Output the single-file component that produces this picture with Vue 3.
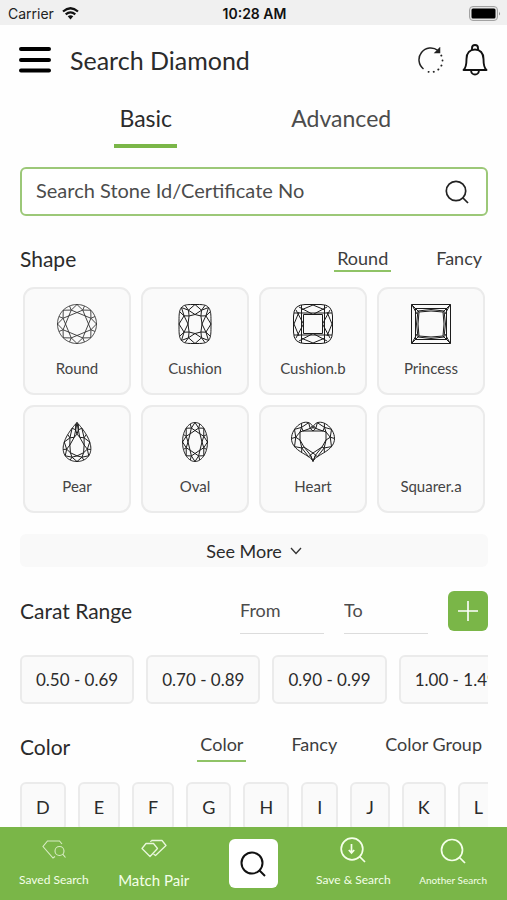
<script setup>
import { ref } from 'vue';

const mode = ref('Basic');
const shapeTab = ref('Round');
const colorTab = ref('Color');
const stone = ref('');
const from = ref('');
const to = ref('');

const carats = ['0.50 - 0.69', '0.70 - 0.89', '0.90 - 0.99', '1.00 - 1.49'];
const colors = ['D', 'E', 'F', 'G', 'H', 'I', 'J', 'K', 'L'];

const r = (p) => `${p[0].toFixed(2)} ${p[1].toFixed(2)}`;

// Builds a cut seen from above: outline, table and the facets between them
const facets = (n, outer, inner) => {
  let d = '';
  for (let i = 0; i <= 96; i++) d += `${i ? 'L' : 'M'}${r(outer(i / 96))}`;
  for (let i = 0; i < n; i++) {
    const a = inner(i / n);
    const b = inner((i + 1) / n);
    const half = outer((i + 0.5) / n);
    const mid = [(a[0] + b[0]) / 4 + half[0] / 2, (a[1] + b[1]) / 4 + half[1] / 2];
    d += `M${r(a)}L${r(b)}`;
    d += `M${r(outer(i / n))}L${r(mid)}L${r(outer((i + 1) / n))}`;
    d += `M${r(a)}L${r(mid)}L${r(b)}M${r(mid)}L${r(half)}`;
  }
  return d;
};

const ellipse = (rx, ry) => (t) => [
  22 + rx * Math.sin(t * 2 * Math.PI),
  22 - ry * Math.cos(t * 2 * Math.PI)
];

const cushion = (rx, ry) => (t) => {
  const s = Math.sin(t * 2 * Math.PI);
  const c = Math.cos(t * 2 * Math.PI);
  return [
    22 + rx * Math.sign(s) * Math.abs(s) ** 0.48,
    22 - ry * Math.sign(c) * Math.abs(c) ** 0.48
  ];
};

const pear = (k, cy) => (t) => {
  const a = t * 2 * Math.PI;
  return [22 + 18 * k * Math.sin(a) * Math.sin(a / 2), cy - 19.5 * k * Math.cos(a)];
};

const heart = (t) => {
  const a = t * 2 * Math.PI;
  return [
    22 + 21.5 * Math.sin(a) ** 3,
    20 - 1.53 * (13 * Math.cos(a) - 2 * Math.cos(2 * a) - 2 * Math.cos(3 * a) - Math.cos(4 * a))
  ];
};

const heartTable = (t) => {
  const pts = [[22, 11], [32, 11], [35, 12], [35, 20], [31, 27], [22, 33], [13, 27], [9, 20], [9, 12], [12, 11]];
  return pts[Math.round(t * 10) % 10];
};

const shapes = [
  { name: 'Round', d: facets(8, ellipse(19.5, 19.5), ellipse(11.5, 11.5)) },
  { name: 'Cushion', bold: true, d: facets(8, cushion(16, 19.5), cushion(7, 9.5)) },
  {
    name: 'Cushion.b',
    bold: true,
    d: 'M14 2.5H30Q41.500 2.500 41.500 14V30Q41.500 41.500 30 41.500H14Q2.500 41.500 2.500 30V14Q2.500 2.500 14 2.500Z' +
      'M12.500 12.500H31.500V31.500H12.500ZM10.500 3V41M33.500 3V41M3 11H41M3 33H41' +
      'M8 5L22 12.500L36 5M10 8L22 3L34 8M8 39L22 31.500L36 39M10 36L22 41L34 36' +
      'M5 8L12.500 22L5 36M8 10L3 22L8 34M39 8L31.500 22L39 36M36 10L41 22L36 34'
  },
  {
    name: 'Princess',
    bold: true,
    d: 'M2.500 2.500H41.500V41.500H2.500ZM6.500 6.500H37.500V37.500H6.500ZM2.500 2.500L10 10M41.500 2.500L34 10M2.500 41.500L10 34M41.500 41.500L34 34' +
      'M9 9L22 7.500L35 9M9 35L22 36.500L35 35M9 9L7.500 22L9 35M35 9L36.500 22L35 35' +
      'M10 10L22 9L34 10L35 22L34 34L22 35L10 34L9 22ZM3 3L8 12M41 3L36 12M3 41L8 32M41 41L36 32'
  },
  { name: 'Pear', bold: true, d: facets(8, pear(1, 22), pear(0.56, 25)) },
  { name: 'Oval', bold: true, d: facets(8, ellipse(12.5, 19.5), ellipse(7, 11.5)) },
  { name: 'Heart', bold: true, d: facets(10, heart, heartTable) },
  { name: 'Squarer.a', d: '' }
];
</script>

<template>
  <div class="screen">
    <div class="status">
      <div class="carrier">
        <span>Carrier</span>
        <svg width="17" height="13" viewBox="0 0 17 13" fill="none" stroke="#111" stroke-width="2.2">
          <path d="M1 4.500Q8.500 -2 16 4.500M3.700 7.400Q8.500 3.300 13.300 7.400" />
          <path d="M5.700 9.300Q8.500 7 11.300 9.300L8.500 12.500Z" fill="#111" stroke="none" />
        </svg>
      </div>
      <strong>10:28 AM</strong>
      <svg class="battery" width="32" height="15" viewBox="0 0 32 15">
        <rect x="0.500" y="0.500" width="28" height="14" rx="3.500" fill="#e4e4e4" stroke="#a2a2a2" />
        <rect x="2.500" y="2.500" width="24" height="10" rx="1.500" fill="#000" />
        <path d="M30 5.500Q31.800 7.500 30 9.500Z" fill="#888" />
      </svg>
    </div>

    <header class="header">
      <button class="icon-btn" aria-label="Menu">
        <svg width="32" height="28" viewBox="0 0 32 28" stroke="#000" stroke-width="4" stroke-linecap="round">
          <path d="M2 3H30M2 14H30M2 24.500H30" />
        </svg>
      </button>
      <h1>Search Diamond</h1>
      <button class="icon-btn" aria-label="Reset">
        <svg width="26" height="26" viewBox="0 0 26 26" fill="none" stroke="#222" stroke-width="1.500">
          <path d="M5.500 22A11.500 11.500 0 0 1 20 3.500" />
          <path d="M17.500 5.500H21.500V1.500Z" fill="#222" />
          <path d="M23.300 8.500A11.500 11.500 0 0 1 8 24" stroke-width="1.900" stroke-linecap="round" stroke-dasharray="0.100 5" />
        </svg>
      </button>
      <button class="icon-btn" aria-label="Notifications">
        <svg width="26" height="32" viewBox="0 0 26 32" fill="none" stroke="#111" stroke-width="1.900" stroke-linejoin="round">
          <path d="M1.500 26H24.500C21.500 23.500 21.500 19 21.500 15C21.500 9 18 5.500 13 5.500S4.500 9 4.500 15C4.500 19 4.500 23.500 1.500 26Z" />
          <path d="M10 6V4Q10 1 13 1T16 4V6M9 26.500Q9.500 30.500 13 30.500T17 26.500" />
        </svg>
      </button>
    </header>

    <nav class="modes">
      <button v-for="m in ['Basic', 'Advanced']" :key="m" :class="{ active: mode === m }" @click="mode = m">{{ m }}</button>
    </nav>

    <main class="content">
      <form class="search" @submit.prevent>
        <input v-model="stone" type="text" placeholder="Search Stone Id/Certificate No" aria-label="Search Stone Id/Certificate No" />
        <button class="icon-btn" aria-label="Search">
          <svg width="24" height="24" viewBox="0 0 24 24" fill="none" stroke="#222" stroke-width="1.700">
            <circle cx="11" cy="11" r="9.700" /><path d="M17.500 17.500L23 23" />
          </svg>
        </button>
      </form>

      <div class="row shape-row">
        <h2>Shape</h2>
        <div class="tabs shape-tabs">
          <button v-for="t in ['Round', 'Fancy']" :key="t" :class="{ active: shapeTab === t }" @click="shapeTab = t">{{ t }}</button>
        </div>
      </div>

      <div class="shapes">
        <button v-for="s in shapes" :key="s.name" class="shape">
          <svg width="44" height="44" viewBox="0 0 44 44" fill="none" :class="{ bold: s.bold }">
            <path :d="s.d" />
          </svg>
          <span>{{ s.name }}</span>
        </button>
      </div>

      <button class="more">
        See More
        <svg width="12" height="8" viewBox="0 0 12 8" fill="none" stroke="#333" stroke-width="1.300"><path d="M1 1L6 6.500L11 1" /></svg>
      </button>

      <div class="row carat-row">
        <h2>Carat Range</h2>
        <input v-model="from" type="text" placeholder="From" aria-label="From" />
        <input v-model="to" type="text" placeholder="To" aria-label="To" />
        <button class="add" aria-label="Add range">
          <svg width="20" height="20" viewBox="0 0 20 20" stroke="#fff" stroke-width="1.600"><path d="M10 0V20M0 10H20" /></svg>
        </button>
      </div>

      <div class="chips carats">
        <button v-for="c in carats" :key="c">{{ c }}</button>
      </div>

      <div class="row color-row">
        <h2>Color</h2>
        <div class="tabs color-tabs">
          <button v-for="t in ['Color', 'Fancy', 'Color Group']" :key="t" :class="{ active: colorTab === t }" @click="colorTab = t">{{ t }}</button>
        </div>
      </div>

      <div class="chips">
        <button v-for="c in colors" :key="c">{{ c }}</button>
      </div>
    </main>

    <footer class="bottom">
      <button class="saved">
        <svg width="24" height="28" viewBox="0 0 24 28" fill="none" stroke="#d8ecc4" stroke-width="1.100">
          <path d="M20 8L17.500 5H5.500L1 10.500L11 22L13 20.500" />
          <circle cx="17.500" cy="15" r="4.500" /><path d="M20.700 18.200L23.500 21.500" />
        </svg>
        <span>Saved Search</span>
      </button>
      <button class="match">
        <svg width="26" height="28" viewBox="0 0 26 28" fill="none" stroke="#e9f7dc" stroke-width="1.300" stroke-linejoin="round">
          <path d="M5 7.500H12.500L16.500 12.500L9 20.500L1 12.500Z" />
          <path d="M10.500 4.500H21L25 9.500L14.500 19.500L12.500 18M10.500 4.500L9.500 6" />
        </svg>
        <span>Match Pair</span>
      </button>
      <button class="main" aria-label="Search">
        <svg width="26" height="26" viewBox="0 0 26 26" fill="none" stroke="#111" stroke-width="2">
          <circle cx="12" cy="12" r="10.500" /><path d="M19 19L25 25" />
        </svg>
      </button>
      <button class="save">
        <svg width="26" height="28" viewBox="0 0 26 28" fill="none" stroke="#f4ffe9" stroke-width="1.700">
          <circle cx="12" cy="13" r="10.800" /><path d="M19.500 20.500L25 26M11.500 8V17M8.800 14L11.500 17L14.200 14" />
        </svg>
        <span>Save &amp; Search</span>
      </button>
      <button class="another">
        <svg width="26" height="28" viewBox="0 0 26 28" fill="none" stroke="#f4ffe9" stroke-width="1.700">
          <circle cx="12" cy="14" r="10.500" /><path d="M19 21L25 27" />
        </svg>
        <span>Another Search</span>
      </button>
    </footer>
  </div>
</template>

<style>
body { margin: 0; background: #fefefe; }
</style>

<style scoped>
.screen { height: 100vh; display: flex; flex-direction: column; overflow: hidden; font-family: Lato, "Open Sans", sans-serif; color: #2b2b2b; }
button, input { font: inherit; color: inherit; border: none; background: none; padding: 0; margin: 0; border-radius: 0; box-sizing: border-box; }
button { cursor: pointer; white-space: nowrap; }
input { outline: none; min-width: 0; }
input::placeholder { color: #4c4c4c; opacity: 1; }
svg { display: block; flex: none; }
h1, h2 { margin: 0; font-weight: 400; }

.status { flex: none; height: 25px; padding: 2px 6px 0 8px; box-sizing: border-box; display: grid; grid-template-columns: 1fr auto 1fr; align-items: center; background: #f0f0f0; font: 14px Inter, sans-serif; color: #222; }
.status strong { font-weight: 600; color: #111; }
.carrier { display: flex; align-items: center; gap: 8px; }
.battery { justify-self: end; }

.header { flex: none; height: 70px; padding: 0 19px; display: flex; align-items: center; }
.header h1 { flex: 1; margin-left: 19px; font-size: 25px; line-height: 32px; }
.header .icon-btn + .icon-btn { margin-left: 18px; }

.modes { flex: none; display: grid; grid-template-columns: 1fr 1fr; justify-items: center; padding: 0 68px 0 48px; }
.modes button { height: 53px; padding: 0 5px 4px; font-size: 23px; color: #4c4c4c; border-bottom: 4px solid transparent; }
.modes .active { color: #2b2b2b; border-color: #7ab648; }

.content { flex: 1; min-height: 0; overflow: hidden; padding: 19px 19px 0 20px; }
.search { height: 49px; box-sizing: border-box; display: flex; align-items: center; padding: 0 17px 0 14px; border: 2px solid #9cc878; border-radius: 6px; background: #fff; }
.search input { flex: 1; height: 40px; padding-bottom: 4px; font-size: 20px; }

.row { display: flex; align-items: center; }
.row h2 { flex: 1; font-size: 21px; line-height: 28px; }
.tabs { display: flex; font-size: 18px; }
.tabs button { height: 26px; border-bottom: 2px solid transparent; color: #3d3d3d; }
.tabs .active { border-color: #8fc366; }
.shape-row { height: 71px; padding-top: 14px; box-sizing: border-box; }
.shape-tabs { gap: 42px; padding-right: 3px; }
.shape-tabs button { padding: 0 3px; }

.shapes { display: grid; grid-template-columns: repeat(4, 1fr); gap: 10px; padding: 0 3px; }
.shape { height: 108px; padding-top: 13px; display: flex; flex-direction: column; align-items: center; gap: 10px; border: 2px solid #ebebeb; border-radius: 11px; background: #fafafa; color: #444; font-size: 15px; line-height: 24px; }
.shape path { stroke: #333; stroke-width: 0.9; }
.shape .bold path { stroke: #1c1c1c; stroke-width: 1; }

.more { width: 100%; height: 33px; margin-top: 21px; display: flex; align-items: center; justify-content: center; gap: 8px; border-radius: 6px; background: #f9f9f9; font-size: 18px; }

.carat-row { height: 43px; margin-top: 24px; align-items: flex-start; }
.carat-row h2 { line-height: 40px; }
.carat-row input { width: 84px; height: 43px; padding-bottom: 4px; margin-right: 20px; border-bottom: 1px solid #dcdcdc; font-size: 18px; }
.add { width: 40px; height: 40px; display: grid; place-items: center; background: #7ab648; border-radius: 6px; }

.chips { display: flex; gap: 12px; overflow: hidden; }
.chips button { flex: none; height: 49px; padding: 0 14px; border: 2px solid #ebebeb; border-radius: 6px; background: #fafafa; font-size: 18px; }
.carats { margin-top: 21px; }
.carats button { font-size: 17px; }

.color-row { height: 78px; }
.color-row h2 { padding-top: 8px; }
.color-tabs { gap: 42px; padding-right: 3px; }
.color-tabs button { height: 38px; padding: 4px 3px 0; }

.bottom { flex: none; height: 73px; box-sizing: border-box; padding: 0 4px; display: grid; grid-template-columns: repeat(5, 1fr); justify-items: center; align-items: start; background: #7ab648; color: #f4ffe9; }
.bottom button { display: flex; flex-direction: column; align-items: center; gap: 6px; padding-top: 9px; line-height: 20px; }
.bottom .main { width: 49px; height: 49px; margin-top: 12px; padding: 0; justify-content: center; background: #fff; border-radius: 6px; }
.saved { font-size: 12px; }
.match { font-size: 15px; }
.save { font-size: 12px; }
.another { font-size: 10px; }
</style>
